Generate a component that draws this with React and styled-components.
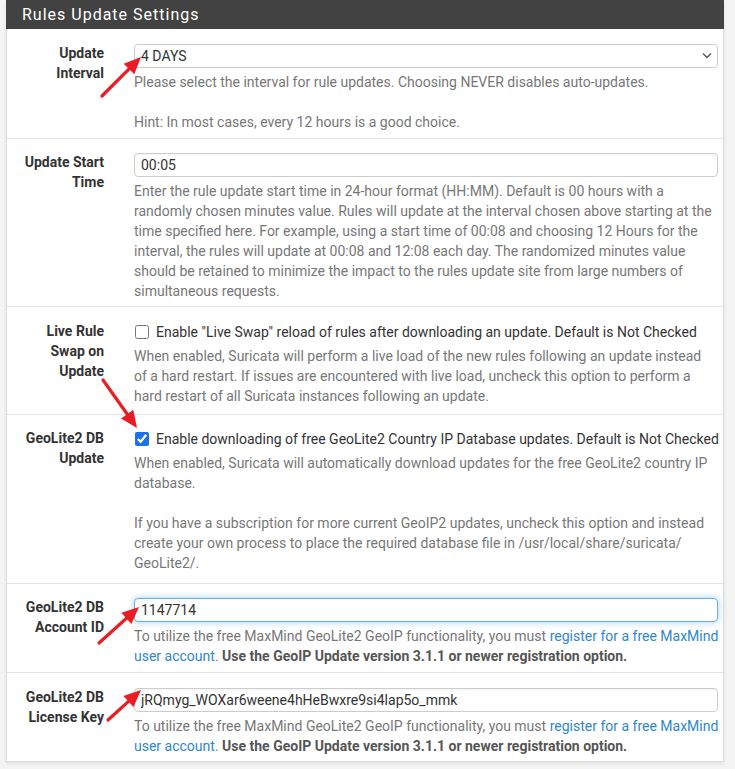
import React from "react";
import styled, { createGlobalStyle } from "styled-components";

const GlobalStyle = createGlobalStyle`
  body {
    margin: 0;
    background: #f4f4f4;
    font-family: Roboto, "Liberation Sans", sans-serif;
  }
`;

const Page = styled.div`
  position: relative;
  width: 735px;
  height: 769px;
  padding-left: 6px;
  box-sizing: border-box;
`;

const Panel = styled.div`
  width: 718px;
  background: #ffffff;
  border: 1px solid #dcdcdc;
  border-top: none;
  box-sizing: border-box;
  box-shadow: 0 2px 4px rgba(0, 0, 0, 0.08);
`;

const Heading = styled.div`
  height: 29px;
  margin: 0 -1px;
  background: #424242;
  color: #ffffff;
  font-size: 16px;
  line-height: 29px;
  letter-spacing: 1px;
  padding-left: 16px;
`;

const Row = styled.div`
  display: grid;
  grid-template-columns: 97px 1fr;
  column-gap: 30px;
  padding: ${(p) => p.$pt || 14}px 3px ${(p) => p.$pb || 6}px 0;
  border-bottom: 1px solid #e3e3e3;
  &:last-child {
    border-bottom: none;
  }
`;

const Label = styled.div`
  padding-left: 10px;
  text-align: right;
  font-size: 14px;
  line-height: 20px;
  font-weight: 700;
  color: #333333;
`;

const Field = styled.div`
  display: flex;
  flex-direction: column;
  min-width: 0;
`;

const TextInput = styled.input`
  display: block;
  height: 24px;
  width: calc(100% - 2px);
  margin-top: 1px;
  padding: 0 6px;
  box-sizing: border-box;
  border: 1px solid ${(p) => (p.$active ? "#66afe9" : "#cccccc")};
  border-radius: 4px;
  box-shadow: ${(p) =>
    p.$active ? "0 0 7px rgba(102, 175, 233, 0.6)" : "inset 0 1px 1px rgba(0,0,0,0.04)"};
  font-family: Roboto, "Liberation Sans", sans-serif;
  font-size: 14px;
  color: #333333;
  outline: none;
`;

const SelectWrap = styled.div`
  position: relative;
  width: calc(100% - 2px);
  margin-top: 1px;
`;

const Select = styled.select`
  display: block;
  width: 100%;
  height: 24px;
  padding: 0 24px 0 6px;
  border: 1px solid #cccccc;
  border-radius: 4px;
  background: #ffffff;
  appearance: none;
  font-family: Roboto, "Liberation Sans", sans-serif;
  font-size: 14px;
  color: #333333;
  outline: none;
`;

const Chevron = styled.svg`
  position: absolute;
  right: 6px;
  top: 8px;
  pointer-events: none;
`;

const Help = styled.div`
  margin-top: 4px;
  font-size: 14px;
  line-height: 20px;
  color: #777777;

  a {
    color: #2f86cf;
    text-decoration: none;
  }
  b {
    color: #555555;
  }
`;

const CheckLine = styled.label`
  display: flex;
  align-items: center;
  height: 21px;
  font-size: 14px;
  line-height: 20px;
  color: #333333;
  white-space: nowrap;
`;

const Check = styled.input`
  width: 14px;
  height: 14px;
  margin: 0 7px 0 1px;
  accent-color: #1a73e8;
`;

const ArrowLayer = styled.svg`
  position: absolute;
  left: 0;
  top: 0;
  pointer-events: none;
`;

function Arrow({ from, to }) {
  const dx = to[0] - from[0];
  const dy = to[1] - from[1];
  const len = Math.hypot(dx, dy);
  const ux = dx / len;
  const uy = dy / len;
  const head = 17;
  const half = 7.5;
  const bx = to[0] - ux * head;
  const by = to[1] - uy * head;
  const pts = [
    [to[0], to[1]],
    [bx - uy * half, by + ux * half],
    [bx + uy * half, by - ux * half],
  ]
    .map((p) => p.join(","))
    .join(" ");
  return (
    <g>
      <line
        x1={from[0]}
        y1={from[1]}
        x2={bx + ux * 2}
        y2={by + uy * 2}
        stroke="#ec1c24"
        strokeWidth="3.2"
        strokeLinecap="round"
      />
      <polygon points={pts} fill="#ec1c24" />
    </g>
  );
}

const registerText = (
  <>
    To utilize the free MaxMind GeoLite2 GeoIP functionality, you must{" "}
    <a href="#register">register for a free MaxMind user account</a>.{" "}
    <b>Use the GeoIP Update version 3.1.1 or newer registration option.</b>
  </>
);

export default function App() {
  return (
    <Page>
      <GlobalStyle />
      <Panel>
        <Heading>Rules Update Settings</Heading>

        <Row $pb={6}>
          <Label>Update Interval</Label>
          <Field>
            <SelectWrap>
              <Select defaultValue="4d">
                <option value="never">NEVER</option>
                <option value="12h">12 HOURS</option>
                <option value="1d">1 DAY</option>
                <option value="4d">4 DAYS</option>
                <option value="7d">7 DAYS</option>
              </Select>
              <Chevron width="10" height="7" viewBox="0 0 10 7">
                <path d="M1 1.5 L5 5.5 L9 1.5" fill="none" stroke="#555" strokeWidth="1.4" />
              </Chevron>
            </SelectWrap>
            <Help>
              Please select the interval for rule updates. Choosing NEVER disables auto-updates.
              <br />
              <br />
              Hint: In most cases, every 12 hours is a good choice.
            </Help>
          </Field>
        </Row>

        <Row $pt={13} $pb={5}>
          <Label>Update Start Time</Label>
          <Field>
            <TextInput defaultValue="00:05" />
            <Help>
              Enter the rule update start time in 24-hour format (HH:MM). Default is 00 hours with a
              randomly chosen minutes value. Rules will update at the interval chosen above starting
              at the time specified here. For example, using a start time of 00:08 and choosing 12
              Hours for the interval, the rules will update at 00:08 and 12:08 each day. The
              randomized minutes value should be retained to minimize the impact to the rules update
              site from large numbers of simultaneous requests.
            </Help>
          </Field>
        </Row>

        <Row $pb={8}>
          <Label>Live Rule Swap on Update</Label>
          <Field>
            <CheckLine>
              <Check type="checkbox" />
              Enable "Live Swap" reload of rules after downloading an update. Default is Not Checked
            </CheckLine>
            <Help>
              When enabled, Suricata will perform a live load of the new rules following an update
              instead
              <br />
              of a hard restart. If issues are encountered with live load, uncheck this option to
              perform a hard restart of all Suricata instances following an update.
            </Help>
          </Field>
        </Row>

        <Row $pt={13} $pb={10}>
          <Label>GeoLite2 DB Update</Label>
          <Field>
            <CheckLine>
              <Check type="checkbox" defaultChecked />
              Enable downloading of free GeoLite2 Country IP Database updates. Default is Not Checked
            </CheckLine>
            <Help>
              When enabled, Suricata will automatically download updates for the free GeoLite2
              country IP database.
              <br />
              <br />
              If you have a subscription for more current GeoIP2 updates, uncheck this option and
              instead create your own process to place the required database file in
              /usr/local/share/suricata/<wbr />GeoLite2/.
            </Help>
          </Field>
        </Row>

        <Row $pt={13} $pb={6}>
          <Label>GeoLite2 DB Account ID</Label>
          <Field>
            <TextInput $active defaultValue="1147714" />
            <Help>{registerText}</Help>
          </Field>
        </Row>

        <Row $pb={5}>
          <Label>GeoLite2 DB License Key</Label>
          <Field>
            <TextInput defaultValue="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" />
            <Help>{registerText}</Help>
          </Field>
        </Row>
      </Panel>

      <ArrowLayer width="735" height="769" viewBox="0 0 735 769">
        <Arrow from={[102, 96]} to={[141, 57]} />
        <Arrow from={[103, 380]} to={[137, 428]} />
        <Arrow from={[99, 643]} to={[139, 607]} />
        <Arrow from={[108, 720]} to={[141, 690]} />
      </ArrowLayer>
    </Page>
  );
}
